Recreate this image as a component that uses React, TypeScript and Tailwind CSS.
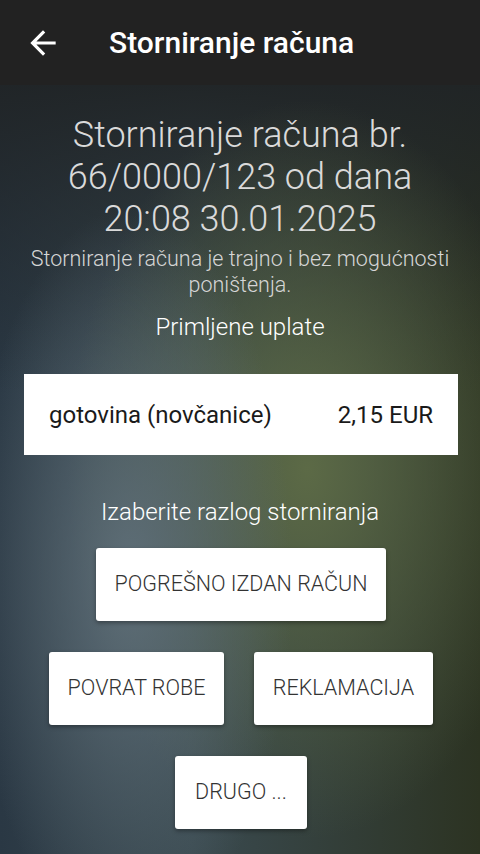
import React from 'react';

const reasons = ['POVRAT ROBE', 'REKLAMACIJA'];

const ReasonButton = ({ label, className }: { label: string; className: string }) => (
  <button
    className={`flex h-[73px] items-center justify-center rounded-[3px] bg-white text-[21.5px] font-light text-[#333] shadow-[0_2px_4px_rgba(0,0,0,0.35)] ${className}`}
  >
    {label}
  </button>
);

const App = () => {
  return (
    <div className="flex h-[854px] w-[480px] flex-col overflow-hidden font-['Roboto',sans-serif]">
      <header className="flex h-[85px] shrink-0 items-center bg-[#222222] pl-6">
        <svg width="38" height="38" viewBox="0 0 24 24" fill="#ffffff">
          <path d="M20 11H7.83l5.59-5.59L12 4l-8 8 8 8 1.41-1.41L7.83 13H20v-2z" />
        </svg>
        <h1 className="ml-[47px] text-[30px] font-medium text-white">Storniranje računa</h1>
      </header>

      <main className="flex flex-1 flex-col items-center bg-[radial-gradient(ellipse_34%_48%_at_27%_64%,rgba(96,112,122,0.95),transparent),radial-gradient(ellipse_50%_48%_at_64%_50%,rgba(92,106,70,1),transparent),linear-gradient(to_bottom,rgba(32,36,38,0.95),rgba(32,36,38,0)_40%),linear-gradient(to_right,#2a3844,#3a4a50_40%,#2c3322)] pt-[29px]">
        <div className="px-4 text-center text-[36px] font-light leading-[42px] text-[#dadada]">
          Storniranje računa br.
          <br />
          66/0000/123 od dana
          <br />
          20:08 30.01.2025
        </div>
        <p className="mt-[6px] px-6 text-center text-[21.5px] font-light leading-[26px] text-[#d6d6d6]">
          Storniranje računa je trajno i bez mogućnosti poništenja.
        </p>
        <p className="mt-[14px] text-[24px] font-light leading-[30px] text-white">Primljene uplate</p>

        <div className="ml-6 mr-[22px] mt-[32px] flex h-[81px] w-[434px] items-center justify-between bg-white px-[25px] text-[24px] text-[#1a1a1a]">
          <span>gotovina (novčanice)</span>
          <span>2,15 EUR</span>
        </div>

        <p className="mt-[42px] text-[24px] font-light leading-[30px] text-white">Izaberite razlog storniranja</p>

        <ReasonButton label="POGREŠNO IZDAN RAČUN" className="ml-[2px] mt-[21px] w-[290px]" />

        <div className="ml-[2px] mt-[31px] flex gap-[30px]">
          <ReasonButton label={reasons[0]} className="w-[175px]" />
          <ReasonButton label={reasons[1]} className="w-[179px]" />
        </div>

        <ReasonButton label="DRUGO ..." className="ml-[2px] mt-[31px] w-[132px]" />
      </main>
    </div>
  );
};

export default App;
